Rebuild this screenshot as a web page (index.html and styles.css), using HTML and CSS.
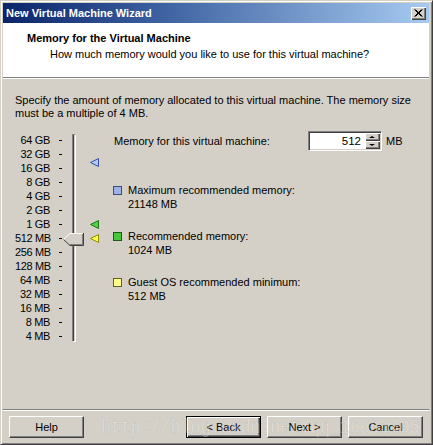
FILE: index.html
```html
<!DOCTYPE html>
<html>
<head>
<meta charset="utf-8">
<link rel="stylesheet" href="styles.css">
</head>
<body>
<div class="window">
  <div class="titlebar">
    <span class="title">New Virtual Machine Wizard</span>
    <span class="close"><svg width="9" height="8" viewBox="0 0 9 8"><path d="M0.5 0.5 L7.5 7.5 M1.5 0.5 L8.5 7.5 M7.5 0.5 L0.5 7.5 M8.5 0.5 L1.5 7.5" stroke="#000" stroke-width="1" fill="none"/></svg></span>
  </div>
  <div class="header">
    <div class="h-title">Memory for the Virtual Machine</div>
    <div class="h-sub">How much memory would you like to use for this virtual machine?</div>
  </div>
  <div class="main">
    <p class="intro">Specify the amount of memory allocated to this virtual machine. The memory size<br>must be a multiple of 4 MB.</p>
    <div class="panel">
      <div class="slider">
        <ul class="scale">
          <li><span class="lbl">64 GB</span><span class="tick"></span></li>
          <li><span class="lbl">32 GB</span><span class="tick"></span></li>
          <li><span class="lbl">16 GB</span><span class="tick"></span></li>
          <li><span class="lbl">8 GB</span><span class="tick"></span></li>
          <li><span class="lbl">4 GB</span><span class="tick"></span></li>
          <li><span class="lbl">2 GB</span><span class="tick"></span></li>
          <li><span class="lbl">1 GB</span><span class="tick"></span></li>
          <li><span class="lbl">512 MB</span><span class="tick"></span></li>
          <li><span class="lbl">256 MB</span><span class="tick"></span></li>
          <li><span class="lbl">128 MB</span><span class="tick"></span></li>
          <li><span class="lbl">64 MB</span><span class="tick"></span></li>
          <li><span class="lbl">32 MB</span><span class="tick"></span></li>
          <li><span class="lbl">16 MB</span><span class="tick"></span></li>
          <li><span class="lbl">8 MB</span><span class="tick"></span></li>
          <li><span class="lbl">4 MB</span><span class="tick"></span></li>
        </ul>
        <div class="track"></div>
        <svg class="marker m-blue" width="9" height="9" viewBox="0 0 9 9"><polygon points="8.5,0.5 8.5,8.5 0.5,4.5" fill="#b4c6f2" stroke="#3552a6"/></svg>
        <svg class="marker m-green" width="9" height="9" viewBox="0 0 9 9"><polygon points="8.5,0.5 8.5,8.5 0.5,4.5" fill="#5ccc4c" stroke="#1b7a14"/></svg>
        <svg class="marker m-yellow" width="9" height="9" viewBox="0 0 9 9"><polygon points="8.5,0.5 8.5,8.5 0.5,4.5" fill="#ffff4a" stroke="#8c8c00"/></svg>
        <svg class="thumb" width="21" height="13" viewBox="0 0 21 13">
          <polygon points="0.5,6.5 7,0.5 20.5,0.5 20.5,12.5 7,12.5" fill="#d4d0c8"/>
          <polyline points="0.5,6.5 7,0.5 19.5,0.5" fill="none" stroke="#fff"/>
          <polyline points="19.5,1 19.5,11.5 7,11.5" fill="none" stroke="#808080"/>
          <polyline points="20.5,0 20.5,12.5 7,12.5 0.5,6.5" fill="none" stroke="#404040"/>
        </svg>
      </div>
      <div class="settings">
        <div class="mem-row">
          <span class="mem-label">Memory for this virtual machine:</span>
          <div class="spin">
            <span class="spin-value">512</span>
            <div class="spin-btns">
              <span class="sbtn"><i class="up"></i></span>
              <span class="sbtn"><i class="down"></i></span>
            </div>
          </div>
          <span class="unit">MB</span>
        </div>
        <div class="legend">
          <div class="item"><span class="sq sq-blue"></span><div class="itext"><div>Maximum recommended memory:</div><div>21148 MB</div></div></div>
          <div class="item"><span class="sq sq-green"></span><div class="itext"><div>Recommended memory:</div><div>1024 MB</div></div></div>
          <div class="item"><span class="sq sq-yellow"></span><div class="itext"><div>Guest OS recommended minimum:</div><div>512 MB</div></div></div>
        </div>
      </div>
    </div>
  </div>
  <div class="footer">
    <div class="buttons">
      <button class="btn help">Help</button>
      <button class="btn default back">&lt; Back</button>
      <button class="btn">Next &gt;</button>
      <button class="btn">Cancel</button>
    </div>
    <div class="watermark">http://blog.csdn.net/qq_16683405</div>
  </div>
</div>
</body>
</html>
```
FILE: styles.css
```css
* { box-sizing: border-box; }
html, body { margin: 0; padding: 0; }
body {
  background: #d4d0c8;
  font-family: "Liberation Sans", Arial, sans-serif;
  font-size: 11px;
  color: #000;
}
.window {
  width: 433px;
  height: 445px;
  border: 1px solid;
  border-color: #d4d0c8 #404040 #404040 #d4d0c8;
  box-shadow: inset 1px 1px 0 #fff, inset -1px -1px 0 #808080;
  padding: 2px 3px 1px 2px;
  display: flex;
  flex-direction: column;
  background: #d4d0c8;
}
.titlebar {
  height: 20px;
  flex: none;
  background: linear-gradient(to right, #0a246a 0%, #3a5e9e 35%, #a6caf0 100%);
  display: flex;
  align-items: center;
  padding: 0 3px 0 3px;
}
.title {
  color: #fff;
  font-weight: bold;
  font-size: 11px;
  flex: 1;
}
.close {
  width: 15px;
  height: 13px;
  background: #d4d0c8;
  box-shadow: inset 1px 1px 0 #fff, inset -1px -1px 0 #404040, inset -2px -2px 0 #808080;
  display: flex;
  align-items: center;
  justify-content: center;
  margin-top: 1px;
}
.close svg { display: block; margin-left: -1px; margin-top: -1px; }
.header {
  height: 55px;
  flex: none;
  background: #fff;
  border-bottom: 1px solid #808080;
  box-shadow: 0 1px 0 #fff;
  padding: 9px 0 0 24px;
  position: relative;
}
.h-title {
  font-weight: bold;
  line-height: 13px;
  margin-bottom: 3px;
}
.h-sub {
  line-height: 13px;
  padding-left: 23px;
}
.main {
  flex: 1;
  padding: 16px 12px 0 12px;
}
.intro {
  margin: 0;
  line-height: 13px;
  white-space: nowrap;
}
.panel {
  display: flex;
  margin-top: 11px;
}
.slider {
  position: relative;
  width: 98px;
  display: flex;
  align-items: flex-start;
  flex: none;
}
.scale {
  list-style: none;
  margin: 0;
  padding: 2px 0 0 0;
  width: 47px;
}
.scale li {
  height: 14px;
  line-height: 14px;
  display: flex;
  align-items: center;
}
.lbl {
  width: 35px;
  text-align: right;
  white-space: nowrap;
  letter-spacing: -0.35px;
}
.tick {
  width: 3px;
  height: 1px;
  background: #000;
  margin-left: 9px;
}
.track {
  margin-left: 10px;
  margin-top: 3px;
  width: 4px;
  height: 208px;
  border-left: 1px solid #808080;
  border-top: 1px solid #808080;
  border-right: 1px solid #fff;
  border-bottom: 1px solid #fff;
  background: #404040;
  box-shadow: inset -1px 0 0 #d4d0c8;
}
.marker { position: absolute; left: 75px; display: block; }
.m-blue { top: 27px; }
.m-green { top: 89px; }
.m-yellow { top: 103px; }
.thumb { position: absolute; left: 48px; top: 102px; display: block; }
.settings {
  flex: 1;
}
.mem-row {
  display: flex;
  align-items: center;
  height: 20px;
}
.mem-label {
  width: 195px;
  padding-left: 1px;
}
.spin {
  width: 74px;
  height: 20px;
  background: #fff;
  border: 1px solid;
  border-color: #808080 #fff #fff #808080;
  box-shadow: inset 1px 1px 0 #404040, inset -1px -1px 0 #d4d0c8;
  display: flex;
  padding: 1px;
}
.spin-value {
  flex: 1;
  text-align: right;
  padding-right: 4px;
  line-height: 16px;
  font-size: 11.5px;
}
.spin-btns {
  width: 15px;
  display: flex;
  flex-direction: column;
}
.sbtn {
  height: 8px;
  background: #d4d0c8;
  box-shadow: inset 1px 1px 0 #fff, inset -1px -1px 0 #404040, inset -2px -2px 0 #808080;
  display: flex;
  align-items: center;
  justify-content: center;
}
.sbtn i { display: block; width: 0; height: 0; border-left: 3px solid transparent; border-right: 3px solid transparent; margin-left: -1px; }
.sbtn .up { border-bottom: 2px solid #000; margin-top: -1px; }
.sbtn .down { border-top: 2px solid #000; margin-top: -1px; }
.unit { margin-left: 4px; }
.legend {
  margin-top: 32px;
  display: flex;
  flex-direction: column;
  gap: 18px;
}
.item {
  display: flex;
  align-items: flex-start;
}
.itext { line-height: 14px; }
.sq {
  width: 9px;
  height: 9px;
  margin-top: 3px;
  margin-right: 6px;
  border: 1px solid #404040;
  flex: none;
}
.sq-blue { background: #9db2e4; border-color: #3a4c7c; }
.sq-green { background: #46c83a; border-color: #1f5a1a; }
.sq-yellow { background: #ffff8a; border-color: #606020; }
.footer {
  flex: none;
  position: relative;
  border-top: 1px solid #808080;
  box-shadow: inset 0 1px 0 #fff;
  padding: 6px 6px 5px 6px;
}
.buttons {
  display: flex;
  gap: 6px;
}
.btn {
  width: 75px;
  height: 22px;
  font-family: "Liberation Sans", Arial, sans-serif;
  font-size: 11px;
  color: #000;
  background: #d4d0c8;
  border: 1px solid;
  border-color: #fff #404040 #404040 #fff;
  box-shadow: inset -1px -1px 0 #808080;
  padding: 0;
  margin: 0;
}
.help { margin-right: auto; }
.default {
  border-color: #000;
  box-shadow: inset 1px 1px 0 #fff, inset -1px -1px 0 #404040, inset -2px -2px 0 #808080;
}
.watermark {
  position: absolute;
  left: 98px;
  top: 7px;
  font-family: "Liberation Mono", "Courier New", monospace;
  font-size: 16.6px;
  line-height: 22px;
  color: rgba(255, 255, 255, 0.35);
  -webkit-text-stroke: 0.4px rgba(140, 136, 130, 0.35);
  transform: scaleY(1.2);
  transform-origin: left center;
  pointer-events: none;
  white-space: nowrap;
}
```
